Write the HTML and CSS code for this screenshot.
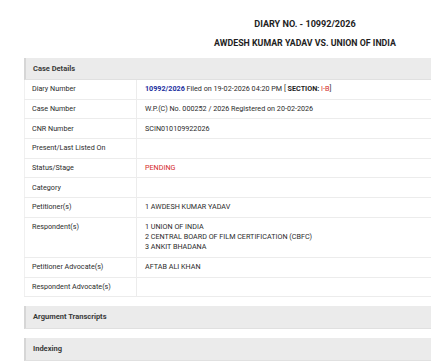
FILE: index.html
```html
<!DOCTYPE html>
<html>
<head>
<meta charset="utf-8">
<link rel="stylesheet" href="styles.css">
</head>
<body>
<div class="page">
  <div class="titles">
    <h1 class="t1">DIARY NO. - 10992/2026</h1>
    <h2 class="t2">AWDESH KUMAR YADAV VS. UNION OF INDIA</h2>
  </div>
  <div class="panel">
    <div class="panel-head">Case Details</div>
    <table class="details">
      <tr><td class="lbl">Diary Number</td><td><span class="diary">10992/2026</span> Filed on 19-02-2026 04:20 PM [ <b>SECTION:</b> <span class="red">I-B</span>]</td></tr>
      <tr><td class="lbl">Case Number</td><td>W.P.(C) No. 000252 / 2026 Registered on 20-02-2026</td></tr>
      <tr><td class="lbl">CNR Number</td><td>SCIN010109922026</td></tr>
      <tr><td class="lbl">Present/Last Listed On</td><td></td></tr>
      <tr><td class="lbl">Status/Stage</td><td class="red">PENDING</td></tr>
      <tr><td class="lbl">Category</td><td></td></tr>
      <tr><td class="lbl">Petitioner(s)</td><td>1 AWDESH KUMAR YADAV</td></tr>
      <tr><td class="lbl">Respondent(s)</td><td>1 UNION OF INDIA<br>2 CENTRAL BOARD OF FILM CERTIFICATION (CBFC)<br>3 ANKIT BHADANA</td></tr>
      <tr><td class="lbl">Petitioner Advocate(s)</td><td>AFTAB ALI KHAN</td></tr>
      <tr><td class="lbl">Respondent Advocate(s)</td><td></td></tr>
    </table>
  </div>
  <div class="panel collapsed"><div class="panel-head">Argument Transcripts</div></div>
  <div class="panel collapsed"><div class="panel-head">Indexing</div></div>
</div>
</body>
</html>
```
FILE: styles.css
```css
html, body {
  margin: 0;
  padding: 0;
  background: #ffffff;
  overflow: hidden;
}
body {
  font-family: Roboto, "Liberation Sans", sans-serif;
  color: #2b2b2b;
  width: 431px;
  height: 363px;
}
.page {
  margin-left: 24px;
  width: 562px;
}
.titles {
  text-align: center;
  padding-top: 18px;
}
.t1 {
  margin: 0;
  font-size: 9.1px;
  line-height: 12px;
  font-weight: 700;
  color: #1e1e1e;
}
.t2 {
  margin: 7px 0 0 0;
  font-size: 8.8px;
  line-height: 12px;
  font-weight: 700;
  color: #1e1e1e;
}
.panel {
  margin-top: 9px;
}
.panel-head {
  background: #ebebeb;
  border-left: 2px solid #d6d6d6;
  border-bottom: 1px solid #e0e0e0;
  height: 21px;
  line-height: 21px;
  padding-left: 7px;
  font-size: 7.5px;
  font-weight: 700;
  color: #3a3a3a;
}
.collapsed .panel-head {
  height: 22px;
  line-height: 22px;
}
.details {
  width: 100%;
  border-collapse: collapse;
  font-size: 7.2px;
  line-height: 10.3px;
  color: #2b2b2b;
}
.details td {
  padding: 4.2px 8px;
  border-bottom: 1px solid #ececec;
  vertical-align: top;
  white-space: nowrap;
}
.details td.lbl {
  width: 96px;
  padding-left: 7px;
  border-left: 1px solid #f0f0f0;
  border-right: 1px solid #ececec;
}
.diary {
  color: #1c2fa0;
  font-weight: 700;
}
.red {
  color: #d42a2a;
}
b {
  font-weight: 700;
  color: #1e1e1e;
}
```
